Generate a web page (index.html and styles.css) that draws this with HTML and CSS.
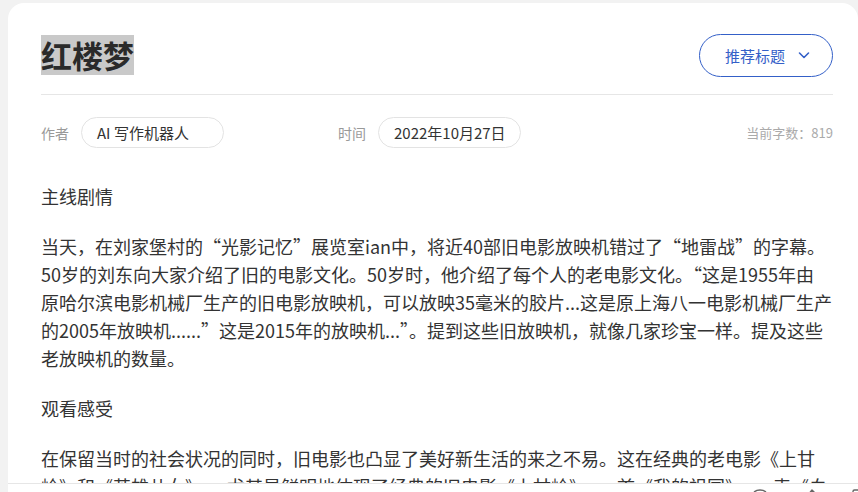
FILE: index.html
```html
<!DOCTYPE html>
<html lang="zh-CN">
<head>
<meta charset="utf-8">
<title>红楼梦</title>
<link rel="stylesheet" href="styles.css">
</head>
<body>
<div class="card">
  <header class="head">
    <h1 class="title"><span class="title-text">红楼梦</span></h1>
    <button class="rec-btn" type="button">
      <span>推荐标题</span>
      <svg class="chev" width="14" height="14" viewBox="0 0 14 14"><path d="M2.5 5 L7 9.5 L11.5 5" fill="none" stroke="#3460c8" stroke-width="1.6" stroke-linecap="round" stroke-linejoin="round"/></svg>
    </button>
  </header>
  <div class="meta">
    <div class="meta-group">
      <span class="meta-label">作者</span>
      <span class="pill">AI 写作机器人</span>
    </div>
    <div class="meta-group">
      <span class="meta-label">时间</span>
      <span class="pill">2022年10月27日</span>
    </div>
    <span class="count">当前字数：819</span>
  </div>
  <article class="content">
    <p>主线剧情</p>
    <p>当天，在刘家堡村的“光影记忆”展览室ian中，将近40部旧电影放映机错过了“地雷战”的字幕。<br>50岁的刘东向大家介绍了旧的电影文化。50岁时，他介绍了每个人的老电影文化。“这是1955年由<br>原哈尔滨电影机械厂生产的旧电影放映机，可以放映35毫米的胶片...这是原上海八一电影机械厂生产<br>的2005年放映机......”这是2015年的放映机...”。提到这些旧放映机，就像几家珍宝一样。提及这些<br>老放映机的数量。</p>
    <p>观看感受</p>
    <p>在保留当时的社会状况的同时，旧电影也凸显了美好新生活的来之不易。这在经典的老电影《上甘<br>岭》和《英雄儿女》，...尤其是鲜明地体现了经典的旧电影《上甘岭》......首《我的祖国》......表《白<br>毛女》的情感。</p>
  </article>
</div>
<div class="toolbar">
  <svg class="tool" width="20" height="20" viewBox="0 0 20 20"><path d="M3 9 C3 5 6 3 10 3 C14 3 17 5 17 9 C17 13 14 15 10 15 L6 18 L6 14.5 C4 13.5 3 11.5 3 9 Z" fill="none" stroke="#666" stroke-width="1.4"/></svg>
  <svg class="tool" width="20" height="20" viewBox="0 0 20 20"><path d="M12 3 L16 7 L7 16 L3 17 L4 13 Z" fill="none" stroke="#666" stroke-width="1.4" stroke-linejoin="round"/></svg>
  <svg class="tool" width="20" height="20" viewBox="0 0 20 20"><rect x="3" y="3" width="14" height="14" rx="1.5" fill="none" stroke="#666" stroke-width="1.4"/></svg>
</div>
</body>
</html>
```
FILE: styles.css
```css
* { box-sizing: border-box; }
html, body {
  margin: 0;
  padding: 0;
  height: 100%;
  overflow: hidden;
}
body {
  background: #f2f2f2;
  font-family: "Noto Sans CJK SC", "Noto Sans", sans-serif;
  color: #333;
}
.card {
  margin: 3px 0 0 8px;
  background: #fff;
  border-radius: 16px 16px 0 0;
  padding: 31px 25px 0 33px;
  min-height: 600px;
}
.head {
  display: flex;
  justify-content: space-between;
  align-items: center;
  height: 61px;
  padding-bottom: 19px;
  border-bottom: 1px solid #e6e6e6;
}
.title {
  margin: 0;
  height: 40px;
  font-size: 31px;
  line-height: 40px;
  font-weight: 700;
  color: #2a2a2a;
}
.title-text {
  background: #c9c9c9;
  display: inline-block;
  height: 40px;
}
.rec-btn {
  height: 43px;
  width: 134px;
  border: 1px solid #3460c8;
  border-radius: 22px;
  background: #fff;
  color: #3460c8;
  font-family: inherit;
  font-size: 15px;
  display: flex;
  align-items: center;
  justify-content: center;
  gap: 12px;
  padding: 0 0 0 4px;
  margin-top: 1px;
}
.chev { display: block; }
.meta {
  display: flex;
  align-items: center;
  margin-top: 22px;
}
.meta-group {
  width: 297px;
  display: flex;
  align-items: center;
  gap: 12px;
}
.meta-label {
  font-size: 14px;
  color: #999;
}
.pill {
  display: inline-block;
  width: 143px;
  height: 31px;
  line-height: 29px;
  border: 1px solid #e3e3e3;
  border-radius: 16px;
  padding-left: 15px;
  font-size: 15px;
  color: #333;
}
.count {
  margin-left: auto;
  font-size: 13px;
  color: #aaa;
}
.content {
  margin-top: 34px;
  font-size: 18px;
  line-height: 28px;
  color: #333;
}
.content p {
  margin: 0 0 22px;
}
.toolbar {
  position: fixed;
  left: 8px;
  right: 0;
  top: 483px;
  height: 40px;
  background: #fff;
  border-top: 1px solid #e6e6e6;
  display: flex;
  justify-content: flex-end;
  gap: 30px;
  padding: 3px 0 0 0;
  margin-right: -12px;
}
.tool { display: block; }
```
